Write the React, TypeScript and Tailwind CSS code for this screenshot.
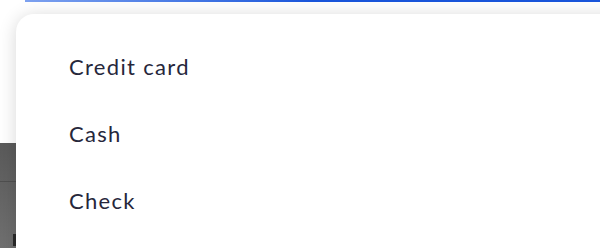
import React from "react";

const methods = ["Credit card", "Cash", "Check"];

export default function App() {
  return (
    <div className="relative h-[248px] w-[600px] overflow-hidden bg-white" style={{ fontFamily: "Lato, 'Open Sans', sans-serif" }}>
      {/* field underline (focused input behind the menu) */}
      <div className="ml-[25px] h-[2px] bg-gradient-to-r from-[#7ea2f0] via-[#1a56db] to-[#1a56db]" />

      {/* content behind the menu */}
      <div className="mt-[141px] flex h-[105px] flex-col bg-gradient-to-b from-[#5a5a5a] to-[#707070]">
        <div className="h-[38px]" />
        <div className="h-px bg-[#4f4f4f]" />
        <div className="mt-auto mb-[2px] ml-[13px] h-[12px] w-[4px] bg-[#2a2a2a]" />
      </div>

      {/* dropdown menu */}
      <div className="absolute left-4 top-[14px] h-[280px] w-[640px] rounded-[18px] bg-white pt-[19px] shadow-[0_2px_18px_rgba(0,0,0,0.16)]">
        <ul className="flex flex-col">
          {methods.map((m) => (
            <li
              key={m}
              className="flex h-[67px] items-center pl-[53px] text-[22px] font-normal tracking-[0.06em] text-[#26273b]"
            >
              {m}
            </li>
          ))}
        </ul>
      </div>
    </div>
  );
}
